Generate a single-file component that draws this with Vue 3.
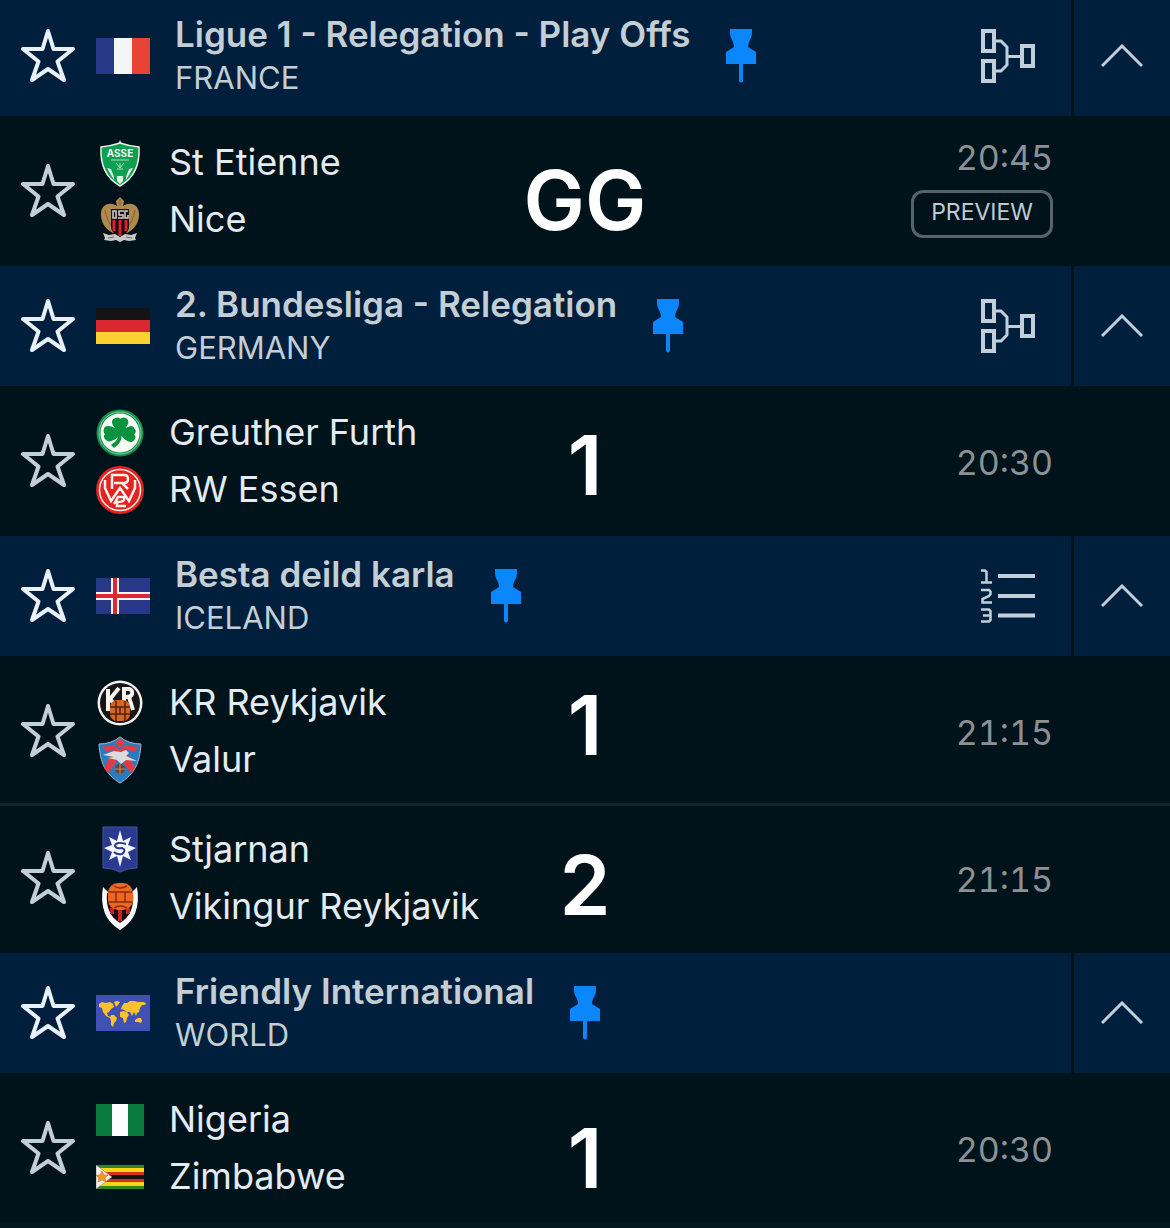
<script setup>
import { reactive } from 'vue'

const leagues = reactive([
  {
    name: 'Ligue 1 - Relegation - Play Offs', country: 'FRANCE', flag: 'france', view: 'draw', open: true,
    matches: [
      { teams: [{ name: 'St Etienne', crest: 'asse' }, { name: 'Nice', crest: 'nice' }], time: '20:45', preview: true, pick: { text: 'GG', top: 35 } },
    ],
  },
  {
    name: '2. Bundesliga - Relegation', country: 'GERMANY', flag: 'germany', view: 'draw', open: true,
    matches: [
      { teams: [{ name: 'Greuther Furth', crest: 'furth' }, { name: 'RW Essen', crest: 'essen' }], time: '20:30', pick: { text: '1', top: 30 } },
    ],
  },
  {
    name: 'Besta deild karla', country: 'ICELAND', flag: 'iceland', view: 'table', open: true,
    matches: [
      { teams: [{ name: 'KR Reykjavik', crest: 'kr' }, { name: 'Valur', crest: 'valur' }], time: '21:15', pick: { text: '1', top: 20 } },
      { teams: [{ name: 'Stjarnan', crest: 'stjarnan' }, { name: 'Vikingur Reykjavik', crest: 'vikingur' }], time: '21:15', pick: { text: '2', top: 33 } },
    ],
  },
  {
    name: 'Friendly International', country: 'WORLD', flag: 'world', view: null, open: true,
    matches: [
      { teams: [{ name: 'Nigeria', crest: 'nigeria' }, { name: 'Zimbabwe', crest: 'zimbabwe' }], time: '20:30', pick: { text: '1', top: 36 } },
    ],
  },
])
</script>

<template>
  <main class="fixtures">
    <section v-for="league in leagues" :key="league.name" class="league">
      <header class="league-head">
        <div class="league-main">
          <button class="icon-btn star" type="button" :aria-label="'Favourite ' + league.name">
            <svg width="54" height="54" viewBox="0 0 54 54"><path d="M27 2L32.500 20H52L36.500 32.500L43 51L27 40L11 51L17.500 32.500L2 20H21.500Z" /></svg>
          </button>

          <svg v-if="league.flag === 'france'" class="flag" viewBox="0 0 54 36"><path fill="#273889" d="M0 0h18v36H0z" /><path fill="#f4f5f7" d="M18 0h18v36H18z" /><path fill="#e94335" d="M36 0h18v36H36z" /></svg>
          <svg v-else-if="league.flag === 'germany'" class="flag" viewBox="0 0 54 36"><path fill="#141414" d="M0 0h54v12H0z" /><path fill="#d9292e" d="M0 12h54v12H0z" /><path fill="#fbd130" d="M0 24h54v12H0z" /></svg>
          <svg v-else-if="league.flag === 'iceland'" class="flag" viewBox="0 0 54 36"><path fill="#273889" d="M0 0h54v36H0z" /><path stroke="#f4f5f7" stroke-width="8" d="M19 0v36M0 18h54" /><path stroke="#dc2a35" stroke-width="4" d="M19 0v36M0 18h54" /></svg>
          <svg v-else class="flag" viewBox="0 0 54 36">
            <path fill="#4050b5" d="M0 0h54v36H0z" />
            <g fill="#fbc22c">
              <path d="M3 9l3-2 4 1 4-1 3 2 1 3-3 2-2 3-2 1 1 3 3 1-1 1-4-2-3-4-1-4-3-1z" />
              <path d="M18 7l3-1 3 1-2 3-2 2z" />
              <path d="M15 20l3 0 3 3-1 3-2 2-1 4-2-2v-4l-1-3z" />
              <path d="M25 14l1-3 2-3 3 0 3-2 4 0 4 1 5 0 3 1-1 2-3 0-2 3-1 4-2 1-1 3-2-4-2 4-2-4-3 0-3-2z" />
              <path d="M24 17l3-1 4 1 2 3-2 3-1 4-2 1-1-5-3-1z" />
              <path d="M39 25l3-2 3 0 1 3-1 2-3-1-3 0z" />
            </g>
          </svg>

          <div class="league-text">
            <h2>{{ league.name }}</h2>
            <p>{{ league.country }}</p>
          </div>

          <button class="icon-btn pin" type="button" aria-label="Unpin">
            <svg width="30" height="54" viewBox="0 0 30 54"><path d="M4 0H26V4C26 10 22 12 22 18L30 23V35H17V52Q15 55 13 52V35H0V23L8 18C8 12 4 10 4 4Z" /></svg>
          </button>

          <button v-if="league.view" class="icon-btn view" type="button" :aria-label="league.view">
            <svg v-if="league.view === 'draw'" width="55" height="54" viewBox="0 0 55 54" fill="none" stroke="#c1cfda">
              <path stroke-width="4" d="M3 2H14V22H3ZM3 32H14V52H3ZM42 17H53V37H42Z" />
              <path stroke-width="3" d="M15 12H21L27 18V36L21 42H15M27 27.500H41" />
            </svg>
            <svg v-else width="55" height="54" viewBox="0 0 55 54" fill="none" stroke="#c1cfda">
              <path stroke-width="4" d="M18 7H55M18 27H55M18 46.500H55" />
              <path stroke-width="2.500" d="M1 1.500H5L6.500 3V13.500M1 13.500H12M1 21H9L10.500 22.500V25L9 27L2.500 30V33.500H12M1 40.500H9L10.500 42V51L9 52.500H1M3 46.500H10.500" />
            </svg>
          </button>
        </div>
        <button class="icon-btn toggle" type="button" :aria-expanded="league.open" aria-label="Show or hide matches" @click="league.open = !league.open">
          <svg width="42" height="24" viewBox="0 0 42 24" fill="none" stroke="#c1cfda" stroke-width="3"><path d="M1 22L21 2L41 22" /></svg>
        </button>
      </header>

      <template v-if="league.open">
        <article v-for="match in league.matches" :key="match.teams[0].name" class="match">
          <button class="icon-btn star" type="button" :aria-label="'Favourite ' + match.teams[0].name">
            <svg width="54" height="54" viewBox="0 0 54 54"><path d="M27 2L32.500 20H52L36.500 32.500L43 51L27 40L11 51L17.500 32.500L2 20H21.500Z" /></svg>
          </button>
          <ul class="teams">
            <li v-for="team in match.teams" :key="team.name">
              <svg class="crest" viewBox="0 0 48 48">
                <g v-if="team.crest === 'asse'">
                  <path fill="#b8b0c4" d="M24 1l3 5h-6z" />
                  <path fill="#0f9f52" stroke="#e8efe9" stroke-width="1.500" d="M5 8Q15 7 24 4Q33 7 43 8C44 25 38 39 24 47C10 39 4 25 5 8Z" />
                  <text x="24" y="18" fill="#f0f7f1" font-size="10" font-weight="700" text-anchor="middle">ASSE</text>
                  <path fill="none" stroke="#a9dcbc" d="M15 21H33M20 24L24 29L28 24M21 30H27M24 24V29" />
                  <path fill="#dff3e5" d="M11 29l4 1 3 8v3zM37 29l-4 1-3 8v3zM21 37h6v5l-3 3-3-3z" />
                </g>
                <g v-else-if="team.crest === 'nice'">
                  <path fill="#b08a4c" d="M24 1l4 4-1 5C34 5 44 8 43 20C42 29 37 34 31 37H17C11 34 6 29 5 20C4 8 14 5 21 10l-1-5z" />
                  <path fill="none" stroke="#7d5e30" d="M9 14Q11 26 18 33M39 14Q37 26 30 33M24 3V10" />
                  <path fill="#171012" d="M15 13h18v18c0 5-5 8-9 10c-4-2-9-5-9-10z" />
                  <path stroke="#d71f2e" stroke-width="3" d="M18 24v11M24 24v16M30 24v11" />
                  <path fill="none" stroke="#d5cfc8" stroke-width="1.500" d="M17 22V15H20V22ZM28 15H23V19H27V22H22M32 15H29V22H32V19" />
                  <path fill="#c9c9c7" d="M7 37l6 2 6-1 5 3 5-3 6 1 6-2-2 5 1 2-7 1-5-1-4 2-4-2-5 1-7-1 1-2z" />
                  <path stroke="#6b6866" d="M12 42l6-1M30 41l6 1" />
                </g>
                <g v-else-if="team.crest === 'furth'">
                  <circle cx="24" cy="24" r="23.500" fill="#12934c" /><circle cx="24" cy="24" r="21" fill="none" stroke="#8fc7a6" /><circle cx="24" cy="24" r="19.500" fill="#f8fbf4" />
                  <path fill="#08933f" stroke="#08933f" stroke-width="1.500" stroke-linejoin="round" d="M24 23C18 18 14 12 19 10C21 9 23 9 24 11C25 9 28 9 30 10C34 13 30 18 25 23C31 18 37 16 38 20C40 22 39 24 37 25C40 27 39 30 36 32C32 33 28 29 25 25C25 31 22 36 18 38L16 36C20 34 23 31 23 25C20 30 14 33 11 31C8 29 8 27 10 25C8 24 8 21 9 19C12 16 18 19 24 23Z" />
                </g>
                <g v-else-if="team.crest === 'essen'">
                  <circle cx="24" cy="24" r="24" fill="#e2231f" /><circle cx="24" cy="24" r="20.500" fill="none" stroke="#fff1ed" stroke-width="1.500" />
                  <path fill="none" stroke="#fff1ed" stroke-width="2.500" d="M16 23V9H28Q32 9 32 13Q32 17 28 17H18M26 17L32 23M9 14V22L15 35L24 22L33 35L39 22V14M18 38L22 31H26Q29 31 28 34Q27 36 21 36V40H30" />
                </g>
                <g v-else-if="team.crest === 'kr'">
                  <circle cx="24" cy="24" r="22.500" fill="#f4f2ee" /><circle cx="24" cy="24" r="20" fill="#171515" />
                  <path fill="none" stroke="#f7f4ef" stroke-width="4" d="M12 10V32M23 9L14 20L19 26M28 24V10H33Q37 11 36 15Q35 18 30 18M33 18L37 31" />
                  <rect x="14" y="21" width="20" height="21" rx="7" fill="#d36526" />
                  <path fill="none" stroke="#51220f" stroke-width="1.500" d="M20 22V42M29 22V42M14 28H34M14 35H34M24 28V35" />
                </g>
                <g v-else-if="team.crest === 'valur'">
                  <path fill="#277cc2" stroke="#aab5c0" d="M24 1Q33 8 45 8C44 26 39 38 24 47C9 38 4 26 3 8Q15 8 24 1Z" />
                  <path fill="#e23b43" d="M24 2l5 5-5 5-5-5zM6 11l12-2 6 5 6-5 12 2-3 5-10-3 10 19-4 5-9-12-2-5-3 5-9 12-4-5 10-19-7 3z" />
                  <path fill="#d9dde0" d="M7 19l11-4 7 1 5-2 3 3-3 3 11 5-11-1-5 4-4-4-9-2 6-1z" />
                  <circle cx="24" cy="33" r="5" fill="#704131" /><path stroke="#d18a55" d="M19 33h10M24 28v10" />
                </g>
                <g v-else-if="team.crest === 'stjarnan'">
                  <path fill="#293a91" stroke="#4554a3" d="M7 1H41V42Q31 42 24 46Q17 42 7 42Z" />
                  <path fill="#f5f7fc" d="M24 4l3 11 8-4-3 8 8 3-8 4 3 8-8-4-3 11-3-11-8 4 3-8-8-4 8-3-3-8 8 4z" />
                  <path fill="none" stroke="#293a91" stroke-width="2" d="M30 18Q20 15 19 20Q20 23 26 22Q31 24 26 28Q21 29 18 26" />
                </g>
                <g v-else-if="team.crest === 'vikingur'">
                  <path fill="#fff" d="M7 4Q2 34 24 47Q46 34 41 4L36 9Q39 28 24 38Q9 28 12 9Z" />
                  <path fill="#120c0c" d="M11 10H37Q39 31 24 40Q9 31 11 10Z" />
                  <path stroke="#cf2029" stroke-width="4" d="M16 25v6M24 25v13M32 25v6" />
                  <rect x="12" y="0" width="25" height="27" rx="10" fill="#ef6820" />
                  <path fill="none" stroke="#8c2a10" stroke-width="1.500" d="M13 9H36M13 19H36M20 9V19M29 9V19M18 3Q24 7 31 3M18 25Q24 21 31 25" />
                </g>
                <g v-else-if="team.crest === 'nigeria'">
                  <path fill="#087b3d" d="M0 8h16v32H0zM32 8h16v32H32z" /><path fill="#fff" d="M16 8h16v32H16z" />
                </g>
                <g v-else>
                  <path fill="#338522" d="M0 12h48v24H0z" /><path fill="#f9d616" d="M0 15h48v18H0z" /><path fill="#d3331d" d="M0 19h48v10H0z" /><path fill="#171010" d="M0 22h48v4H0z" />
                  <path fill="#f5f2ee" stroke="#777" stroke-width=".5" d="M0 12L16 24L0 36Z" /><path fill="#f39a22" stroke="#d9552b" stroke-width=".5" d="M6 18l2 4 4 0-3 3 1 4-4-2-4 2 1-4-3-3 4 0z" />
                </g>
              </svg>
              <span>{{ team.name }}</span>
            </li>
          </ul>
          <div class="kickoff">
            <time>{{ match.time }}</time>
            <button v-if="match.preview" class="preview" type="button">PREVIEW</button>
          </div>
          <strong class="pick" :style="{ top: match.pick.top + 'px' }">{{ match.pick.text }}</strong>
        </article>
      </template>
    </section>
  </main>
</template>

<style>
body {
  margin: 0;
  background: #02191e;
}
</style>

<style scoped>
.fixtures {
  margin-top: -4px;
  font-family: Inter, "Liberation Sans", sans-serif;
  color: #e4ebf1;
}

h2,
p,
ul {
  margin: 0;
  padding: 0;
}

svg {
  display: block;
  flex: none;
}

.icon-btn {
  display: block;
  flex: none;
  padding: 0;
  border: 0;
  background: none;
  cursor: pointer;
}

.league-head {
  display: flex;
  gap: 3px;
  height: 120px;
  background: #00121c;
}

.league-main {
  display: flex;
  flex: 1;
  align-items: center;
  min-width: 0;
  padding: 0 36px 0 21px;
  background: #001f3d;
}

.star path {
  fill: none;
  stroke: #c4ced6;
  stroke-width: 4;
  stroke-linejoin: round;
}

.league-head .star path {
  stroke: #e9f0f7;
}

.flag {
  width: 54px;
  height: 36px;
  margin-left: 21px;
}

.league-text {
  margin-left: 25px;
  padding-bottom: 4px;
  color: #c3ced5;
  white-space: nowrap;
}

.league-text h2 {
  font-size: 35px;
  font-weight: 600;
  line-height: 48px;
}

.league-text p {
  font-size: 31px;
  line-height: 40px;
}

.pin {
  margin-left: 36px;
}

.pin path {
  fill: #0b86fb;
}

.view {
  margin-left: auto;
}

.toggle {
  display: flex;
  align-items: center;
  justify-content: center;
  width: 96px;
  background: #001f3d;
}

.match {
  position: relative;
  display: flex;
  align-items: center;
  height: 150px;
  padding: 0 117px 0 21px;
  background: #00131b;
}

.match + .match {
  margin-top: -3px;
  box-shadow: inset 0 3px #0b262d;
}

.teams {
  display: grid;
  gap: 9px;
  margin-left: 21px;
  list-style: none;
}

.teams li {
  display: flex;
  gap: 25px;
  height: 48px;
  font-size: 36px;
  line-height: 46px;
  white-space: nowrap;
}

.crest {
  width: 48px;
  height: 48px;
}

.kickoff {
  display: flex;
  flex-direction: column;
  align-items: flex-end;
  gap: 13px;
  margin-left: auto;
  padding-top: 3px;
  color: #8c9196;
  font-size: 34px;
  font-variant-numeric: tabular-nums;
  line-height: 38px;
}

.preview {
  height: 48px;
  margin-bottom: 8px;
  padding: 0 17px 4px;
  border: 3px solid #56636a;
  border-radius: 12px;
  background: none;
  color: #bfcbd1;
  font: 400 23px/36px Inter, "Liberation Sans", sans-serif;
  cursor: pointer;
}

.pick {
  position: absolute;
  left: 0;
  right: 0;
  color: #fff;
  font-size: 82px;
  font-weight: 600;
  line-height: 100px;
  text-align: center;
  pointer-events: none;
}
</style>
